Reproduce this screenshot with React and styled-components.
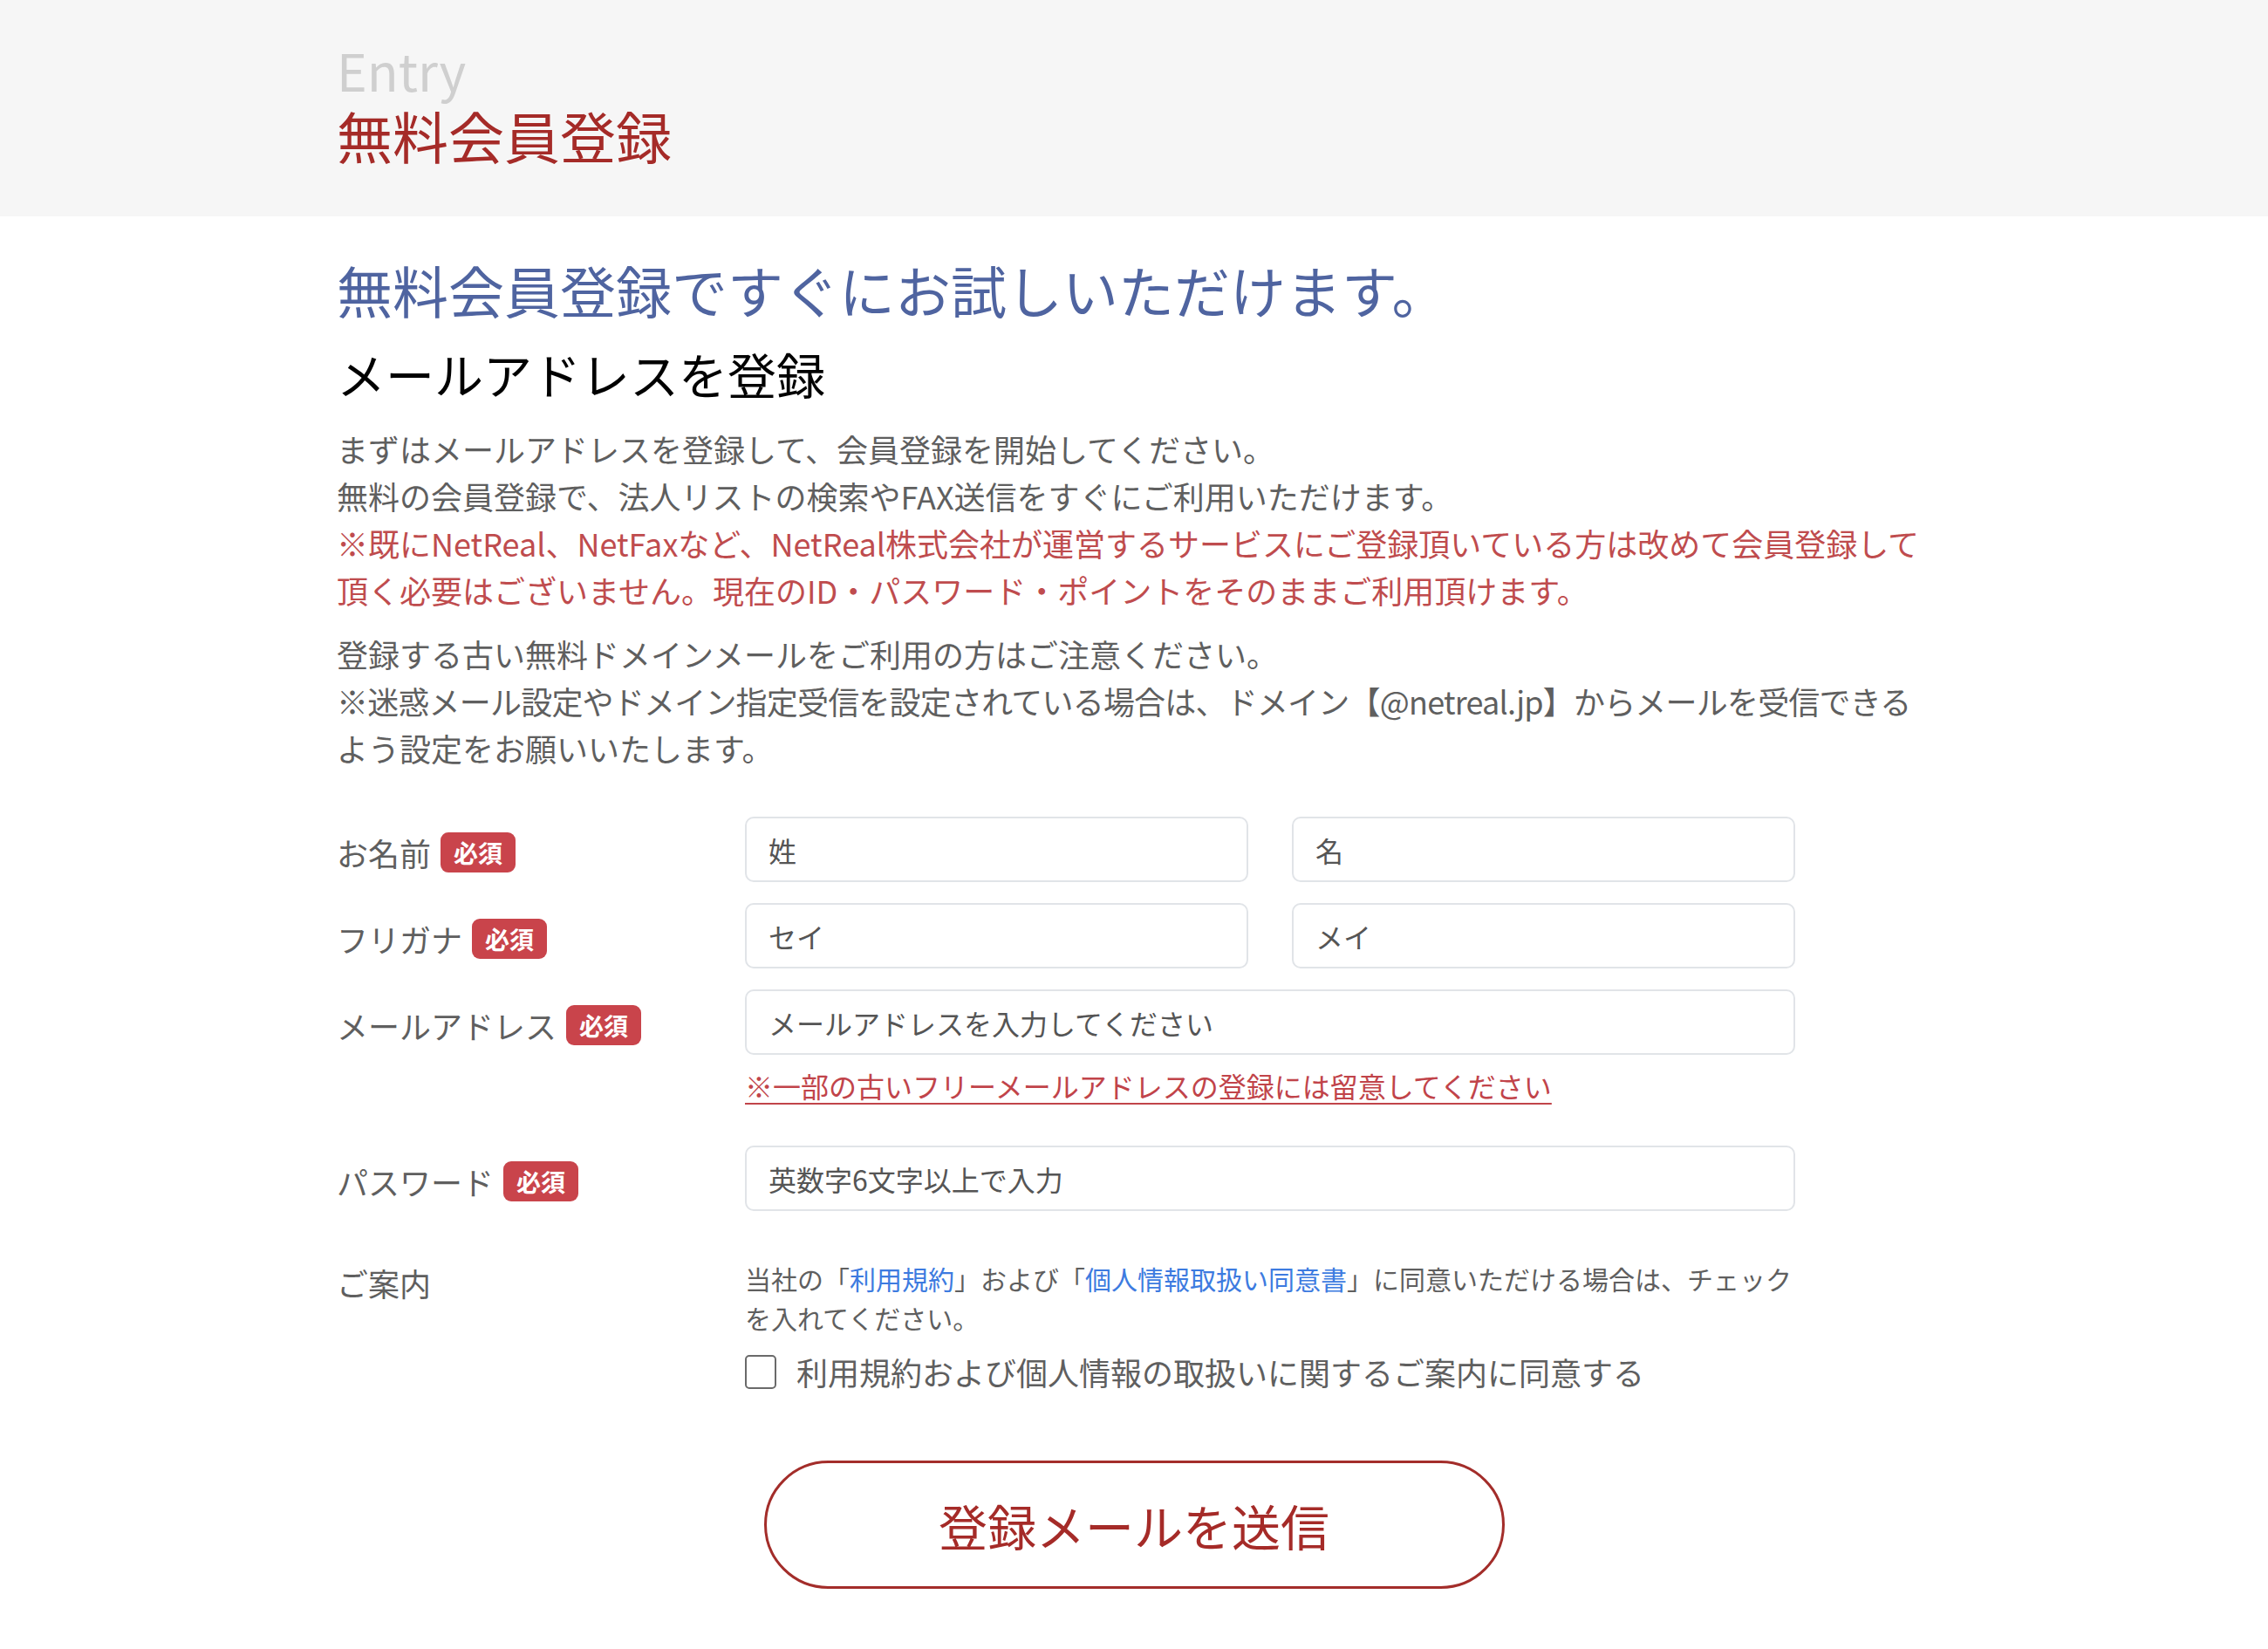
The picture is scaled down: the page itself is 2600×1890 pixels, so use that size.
import styled, { createGlobalStyle } from 'styled-components';

const GlobalStyle = createGlobalStyle`
  body {
    margin: 0;
    background: #fff;
    font-family: "Noto Sans CJK JP", "Noto Sans", sans-serif;
    color: #5f5f5f;
  }
  * {
    box-sizing: border-box;
  }
`;

const Header = styled.header`
  height: 248px;
  background-color: #f6f6f6;
`;

const Inner = styled.div`
  width: 1828px;
  margin: 0 auto;
`;

const HeaderInner = styled(Inner)`
  padding-top: 50px;
`;

const EntryLabel = styled.div`
  font-size: 59px;
  line-height: 1;
  color: #cfcfcf;
`;

const PageTitle = styled.h1`
  margin: 13px 0 0;
  font-size: 64px;
  line-height: 1;
  font-weight: 400;
  color: #a52b28;
`;

const Lead = styled.h2`
  margin: 51px 0 0;
  font-size: 64px;
  line-height: 1;
  font-weight: 400;
  color: #4f64a0;
`;

const SubTitle = styled.h3`
  margin: 37px 0 0;
  font-size: 56px;
  line-height: 1;
  font-weight: 400;
  color: #000;
`;

const Text = styled.p`
  margin: ${({ first }) => (first ? '31px 0 0' : '19px 0 0')};
  font-size: 36px;
  line-height: 1.5;
  color: #5f5f5f;
`;

const Warn = styled.span`
  color: #bf4c4e;
`;

// keeps the long notice line breaking where the original does
const Tight = styled.span`
  white-space: nowrap;
  letter-spacing: -0.8px;
`;

const Form = styled.form`
  margin-top: 52px;
  display: flex;
  flex-direction: column;
  gap: 24px;
`;

const Row = styled.div`
  display: grid;
  grid-template-columns: 468px 1204px;
  align-items: start;
  margin-top: ${({ spaced }) => spaced || 0}px;
`;

const Label = styled.div`
  display: flex;
  align-items: center;
  gap: 11px;
  height: ${({ tall }) => (tall ? '54px' : '75px')};
  padding-top: ${({ tall }) => (tall ? '0' : '6px')};
  font-size: 36px;
  line-height: 1.5;
  color: #5f5f5f;
`;

const Required = styled.span`
  display: inline-flex;
  align-items: center;
  justify-content: center;
  width: 86px;
  height: 46px;
  border-radius: 9px;
  background-color: #c9444b;
  color: #fff;
  font-size: 28px;
  font-weight: 700;
  line-height: 1;
`;

const Pair = styled.div`
  display: grid;
  grid-template-columns: 1fr 1fr;
  gap: 50px;
`;

const Input = styled.input`
  display: block;
  width: 100%;
  height: 75px;
  padding: 0 25px;
  border: 2px solid #e1e4e8;
  border-radius: 10px;
  background: #fff;
  font-family: inherit;
  font-size: 32px;
  color: #333;
  outline: none;

  &::placeholder {
    color: #555;
  }
`;

const Note = styled.a`
  display: inline-block;
  margin: 11px 0 21px;
  font-size: 32px;
  line-height: 1.5;
  color: #c1444a;
  text-decoration: underline;
  text-underline-offset: 6px;
  text-decoration-thickness: 2px;
`;

const Guide = styled.p`
  margin: 0;
  font-size: 30px;
  line-height: 1.5;
  color: #5f5f5f;
`;

const Link = styled.a`
  color: #3d7be0;
  text-decoration: none;
`;

const Agree = styled.label`
  display: flex;
  align-items: center;
  gap: 23px;
  margin-top: 12px;
  font-size: 36px;
  line-height: 1.5;
  color: #5f5f5f;
`;

const Box = styled.span`
  width: 36px;
  height: 39px;
  border: 2px solid #6a6a6a;
  border-radius: 5px;
  background: #fff;
  flex-shrink: 0;
`;

const Actions = styled.div`
  display: flex;
  justify-content: center;
  padding: 51px 0 67px;
`;

const Submit = styled.button`
  width: 849px;
  height: 147px;
  border: 3px solid #a32d2a;
  border-radius: 74px;
  background: #fff;
  font-family: inherit;
  font-size: 56px;
  color: #a52b28;
  cursor: pointer;
`;

const App = () => (
  <>
    <GlobalStyle />
    <Header>
      <HeaderInner>
        <EntryLabel>Entry</EntryLabel>
        <PageTitle>無料会員登録</PageTitle>
      </HeaderInner>
    </Header>
    <Inner>
      <Lead>無料会員登録ですぐにお試しいただけます。</Lead>
      <SubTitle>メールアドレスを登録</SubTitle>
      <Text first>
        まずはメールアドレスを登録して、会員登録を開始してください。
        <br />
        無料の会員登録で、法人リストの検索やFAX送信をすぐにご利用いただけます。
        <br />
        <Warn>
          ※既にNetReal、NetFaxなど、NetReal株式会社が運営するサービスにご登録頂いている方は改めて会員登録して頂く必要はございません。現在のID・パスワード・ポイントをそのままご利用頂けます。
        </Warn>
      </Text>
      <Text>
        登録する古い無料ドメインメールをご利用の方はご注意ください。
        <br />
        <Tight>※迷惑メール設定やドメイン指定受信を設定されている場合は、ドメイン【@netreal.jp】からメールを受信できる</Tight>
        <br />
        よう設定をお願いいたします。
      </Text>

      <Form onSubmit={e => e.preventDefault()}>
        <Row>
          <Label>
            お名前<Required>必須</Required>
          </Label>
          <Pair>
            <Input placeholder='姓' />
            <Input placeholder='名' />
          </Pair>
        </Row>
        <Row>
          <Label>
            フリガナ<Required>必須</Required>
          </Label>
          <Pair>
            <Input placeholder='セイ' />
            <Input placeholder='メイ' />
          </Pair>
        </Row>
        <Row>
          <Label>
            メールアドレス<Required>必須</Required>
          </Label>
          <div>
            <Input placeholder='メールアドレスを入力してください' />
            <Note href='#'>※一部の古いフリーメールアドレスの登録には留意してください</Note>
          </div>
        </Row>
        <Row>
          <Label>
            パスワード<Required>必須</Required>
          </Label>
          <Input type='password' placeholder='英数字6文字以上で入力' />
        </Row>
        <Row spaced={31}>
          <Label tall>ご案内</Label>
          <div>
            <Guide>
              当社の「<Link href='#'>利用規約</Link>」および「<Link href='#'>個人情報取扱い同意書</Link>」に同意いただける場合は、チェックを入れてください。
            </Guide>
            <Agree>
              <Box />
              利用規約および個人情報の取扱いに関するご案内に同意する
            </Agree>
          </div>
        </Row>
        <Actions>
          <Submit type='submit'>登録メールを送信</Submit>
        </Actions>
      </Form>
    </Inner>
  </>
);

export default App;
